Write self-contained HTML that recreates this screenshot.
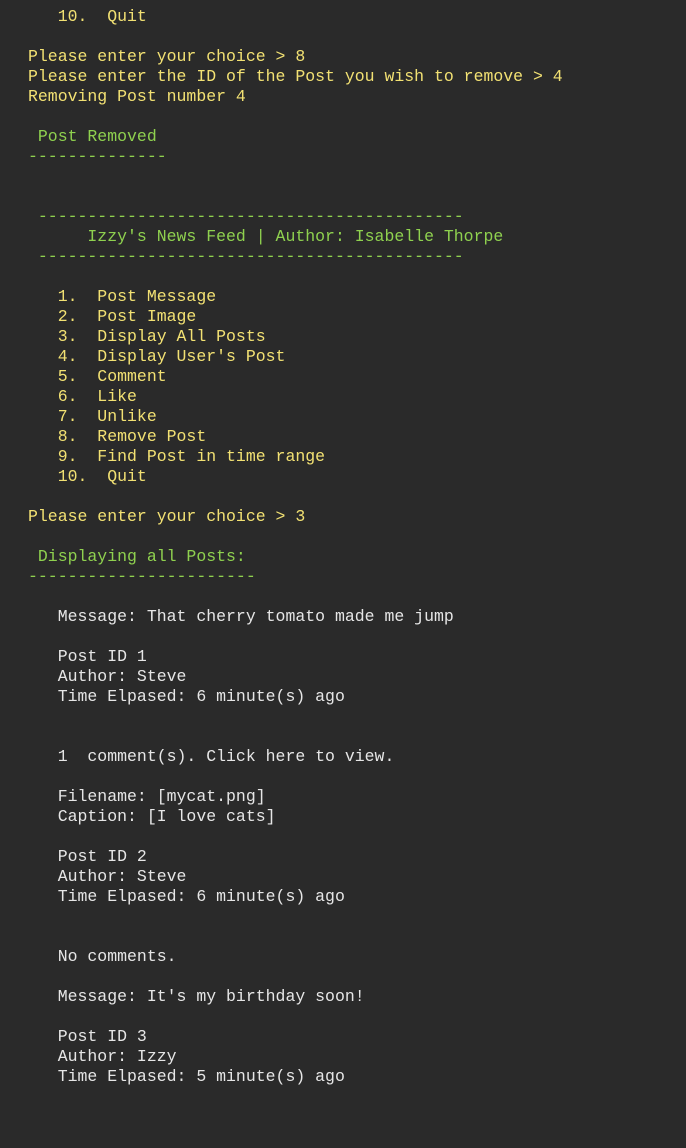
<!DOCTYPE html>
<html><head><meta charset="utf-8"><style>
html,body{margin:0;padding:0;background:#2a2a2a;width:686px;height:1148px;overflow:hidden}
pre{margin:0;position:absolute;left:28px;top:7px;font-family:"Liberation Mono",monospace;font-size:16.5px;line-height:20px;color:#e6e6e6}
.y{color:#f2e173}.g{color:#8fd14f}.w{color:#e6e6e6}
</style></head><body><pre><span class="y">   10.  Quit

Please enter your choice &gt; 8
Please enter the ID of the Post you wish to remove &gt; 4
Removing Post number 4
</span><span class="g">
 Post Removed
--------------


 -------------------------------------------
      Izzy's News Feed | Author: Isabelle Thorpe
 -------------------------------------------
</span><span class="y">
   1.  Post Message
   2.  Post Image
   3.  Display All Posts
   4.  Display User's Post
   5.  Comment
   6.  Like
   7.  Unlike
   8.  Remove Post
   9.  Find Post in time range
   10.  Quit

Please enter your choice &gt; 3
</span><span class="g">
 Displaying all Posts:
-----------------------
</span><span class="w">
   Message: That cherry tomato made me jump

   Post ID 1
   Author: Steve
   Time Elpased: 6 minute(s) ago


   1  comment(s). Click here to view.

   Filename: [mycat.png]
   Caption: [I love cats]

   Post ID 2
   Author: Steve
   Time Elpased: 6 minute(s) ago


   No comments.

   Message: It's my birthday soon!

   Post ID 3
   Author: Izzy
   Time Elpased: 5 minute(s) ago</span></pre></body></html>
